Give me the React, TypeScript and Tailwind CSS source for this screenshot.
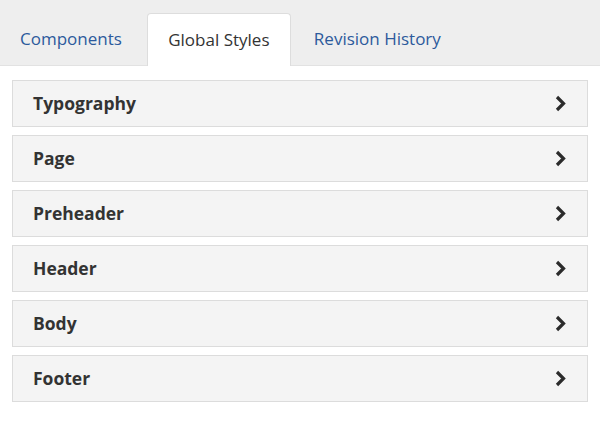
export default function App() {
  const items = ["Typography", "Page", "Preheader", "Header", "Body", "Footer"];
  return (
    <div className="w-[600px] h-[439px] bg-white" style={{ fontFamily: '"Open Sans", sans-serif' }}>
      <div className="h-[66px] bg-[#eeeeee] flex items-end border-b border-[#e2e2e2]">
        <div className="flex items-end pl-[8px] h-[52px]">
          <div className="h-[52px] pl-[12px] pr-[25px] flex items-center text-[17px] text-[#2c5a9c]">Components</div>
          <div className="h-[53px] -mb-px w-[144px] bg-white border border-b-0 border-[#dddddd] rounded-t-[4px] flex items-center justify-center text-[17px] text-[#333]">Global Styles</div>
          <div className="h-[52px] px-[23px] flex items-center text-[17px] text-[#2c5a9c]">Revision History</div>
        </div>
      </div>
      <div className="px-[12px] pt-[14px] flex flex-col gap-[8px]">
        {items.map((t) => (
          <div key={t} className="h-[47px] bg-[#f4f4f4] border border-[#dcdcdc] flex items-center justify-between pl-[20px] pr-[20px]">
            <span className="text-[17.5px] font-bold text-[#333]">{t}</span>
            <svg width="13" height="17" viewBox="0 0 13 17">
              <path d="M3 2 L9.5 8.5 L3 15" fill="none" stroke="#2b2b2b" strokeWidth="3.2" />
            </svg>
          </div>
        ))}
      </div>
    </div>
  );
}
